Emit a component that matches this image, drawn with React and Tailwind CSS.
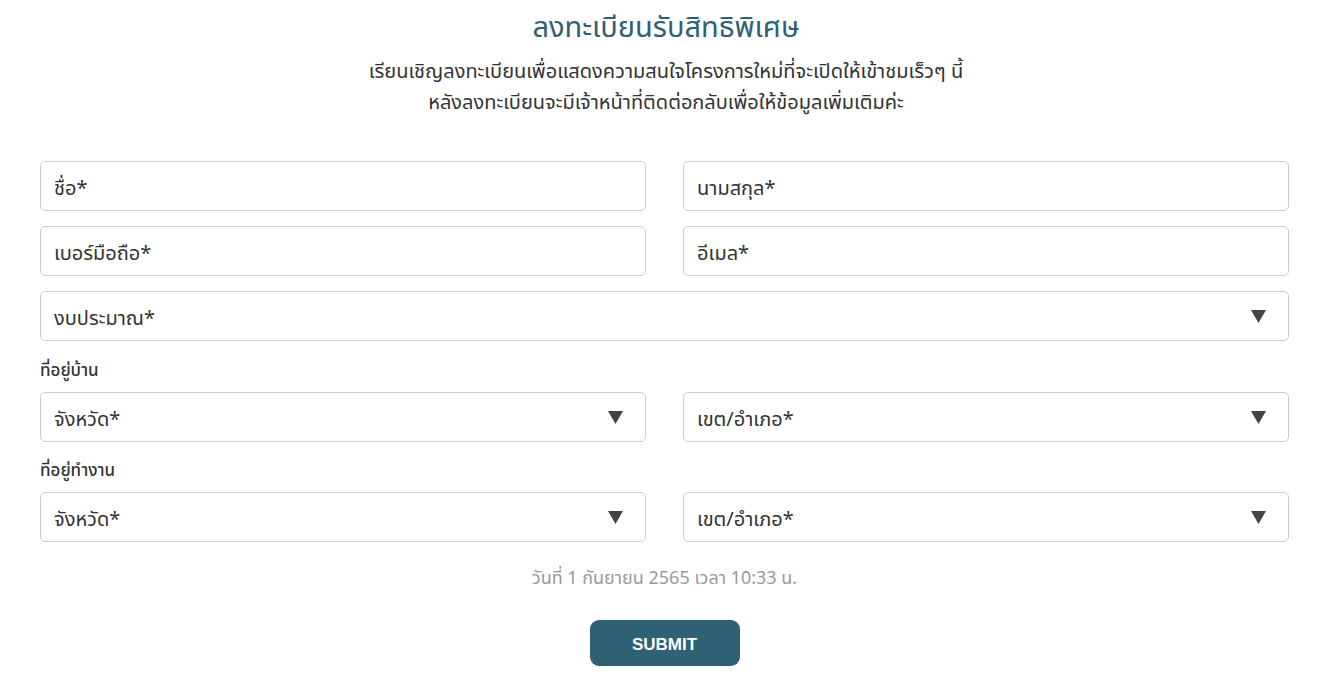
import React from "react";

const font = { fontFamily: '"Noto Sans Thai", "Noto Sans", "Liberation Sans", sans-serif' };

function Field({ label, select, className = "" }) {
  return (
    <div
      className={`h-[50px] rounded-[5px] border border-[#cccccc] bg-white flex items-center justify-between pl-[13px] pr-[22px] ${className}`}
    >
      <span className="text-[20px] text-[#333333] leading-none pt-[6px]">{label}</span>
      {select && (
        <svg width="15" height="13" viewBox="0 0 15 13" className="shrink-0">
          <polygon points="0,0 15,0 7.5,13" fill="#444444" />
        </svg>
      )}
    </div>
  );
}

export default function App() {
  return (
    <div className="w-[1332px] h-[695px] bg-white overflow-hidden" style={font}>
      <div className="flex flex-col items-center pt-[9px]">
        <h1 className="text-[29px] leading-[38px] text-[#2f6174] font-normal">ลงทะเบียนรับสิทธิพิเศษ</h1>
        <p className="mt-[10px] text-[20px] leading-[31px] text-[#333333] text-center">
          เรียนเชิญลงทะเบียนเพื่อแสดงความสนใจโครงการใหม่ที่จะเปิดให้เข้าชมเร็วๆ นี้
          <br />
          หลังลงทะเบียนจะมีเจ้าหน้าที่ติดต่อกลับเพื่อให้ข้อมูลเพิ่มเติมค่ะ
        </p>
      </div>

      <div className="ml-[40px] w-[1249px] mt-[42px]">
        <div className="grid grid-cols-2 gap-x-[37px] gap-y-[15px]">
          <Field label="ชื่อ*" />
          <Field label="นามสกุล*" />
          <Field label="เบอร์มือถือ*" />
          <Field label="อีเมล*" />
          <Field label="งบประมาณ*" select className="col-span-2" />
        </div>

        <div className="h-[51px] flex items-center pt-[10px]">
          <span className="text-[17px] font-medium text-[#333333]">ที่อยู่บ้าน</span>
        </div>
        <div className="grid grid-cols-2 gap-x-[37px]">
          <Field label="จังหวัด*" select />
          <Field label="เขต/อำเภอ*" select />
        </div>

        <div className="h-[50px] flex items-center pt-[10px]">
          <span className="text-[17px] font-medium text-[#333333]">ที่อยู่ทำงาน</span>
        </div>
        <div className="grid grid-cols-2 gap-x-[37px]">
          <Field label="จังหวัด*" select />
          <Field label="เขต/อำเภอ*" select />
        </div>

        <div className="flex flex-col items-center">
          <p className="mt-[25px] text-[18px] leading-[24px] text-[#9a9a9a]">วันที่ 1 กันยายน 2565 เวลา 10:33 น.</p>
          <button className="mt-[29px] w-[150px] h-[46px] rounded-[9px] bg-[#2d6173] text-white text-[17px] font-bold pt-[3px]" style={{ fontFamily: '"Liberation Sans", Arial, sans-serif' }}>
            SUBMIT
          </button>
        </div>
      </div>
    </div>
  );
}
